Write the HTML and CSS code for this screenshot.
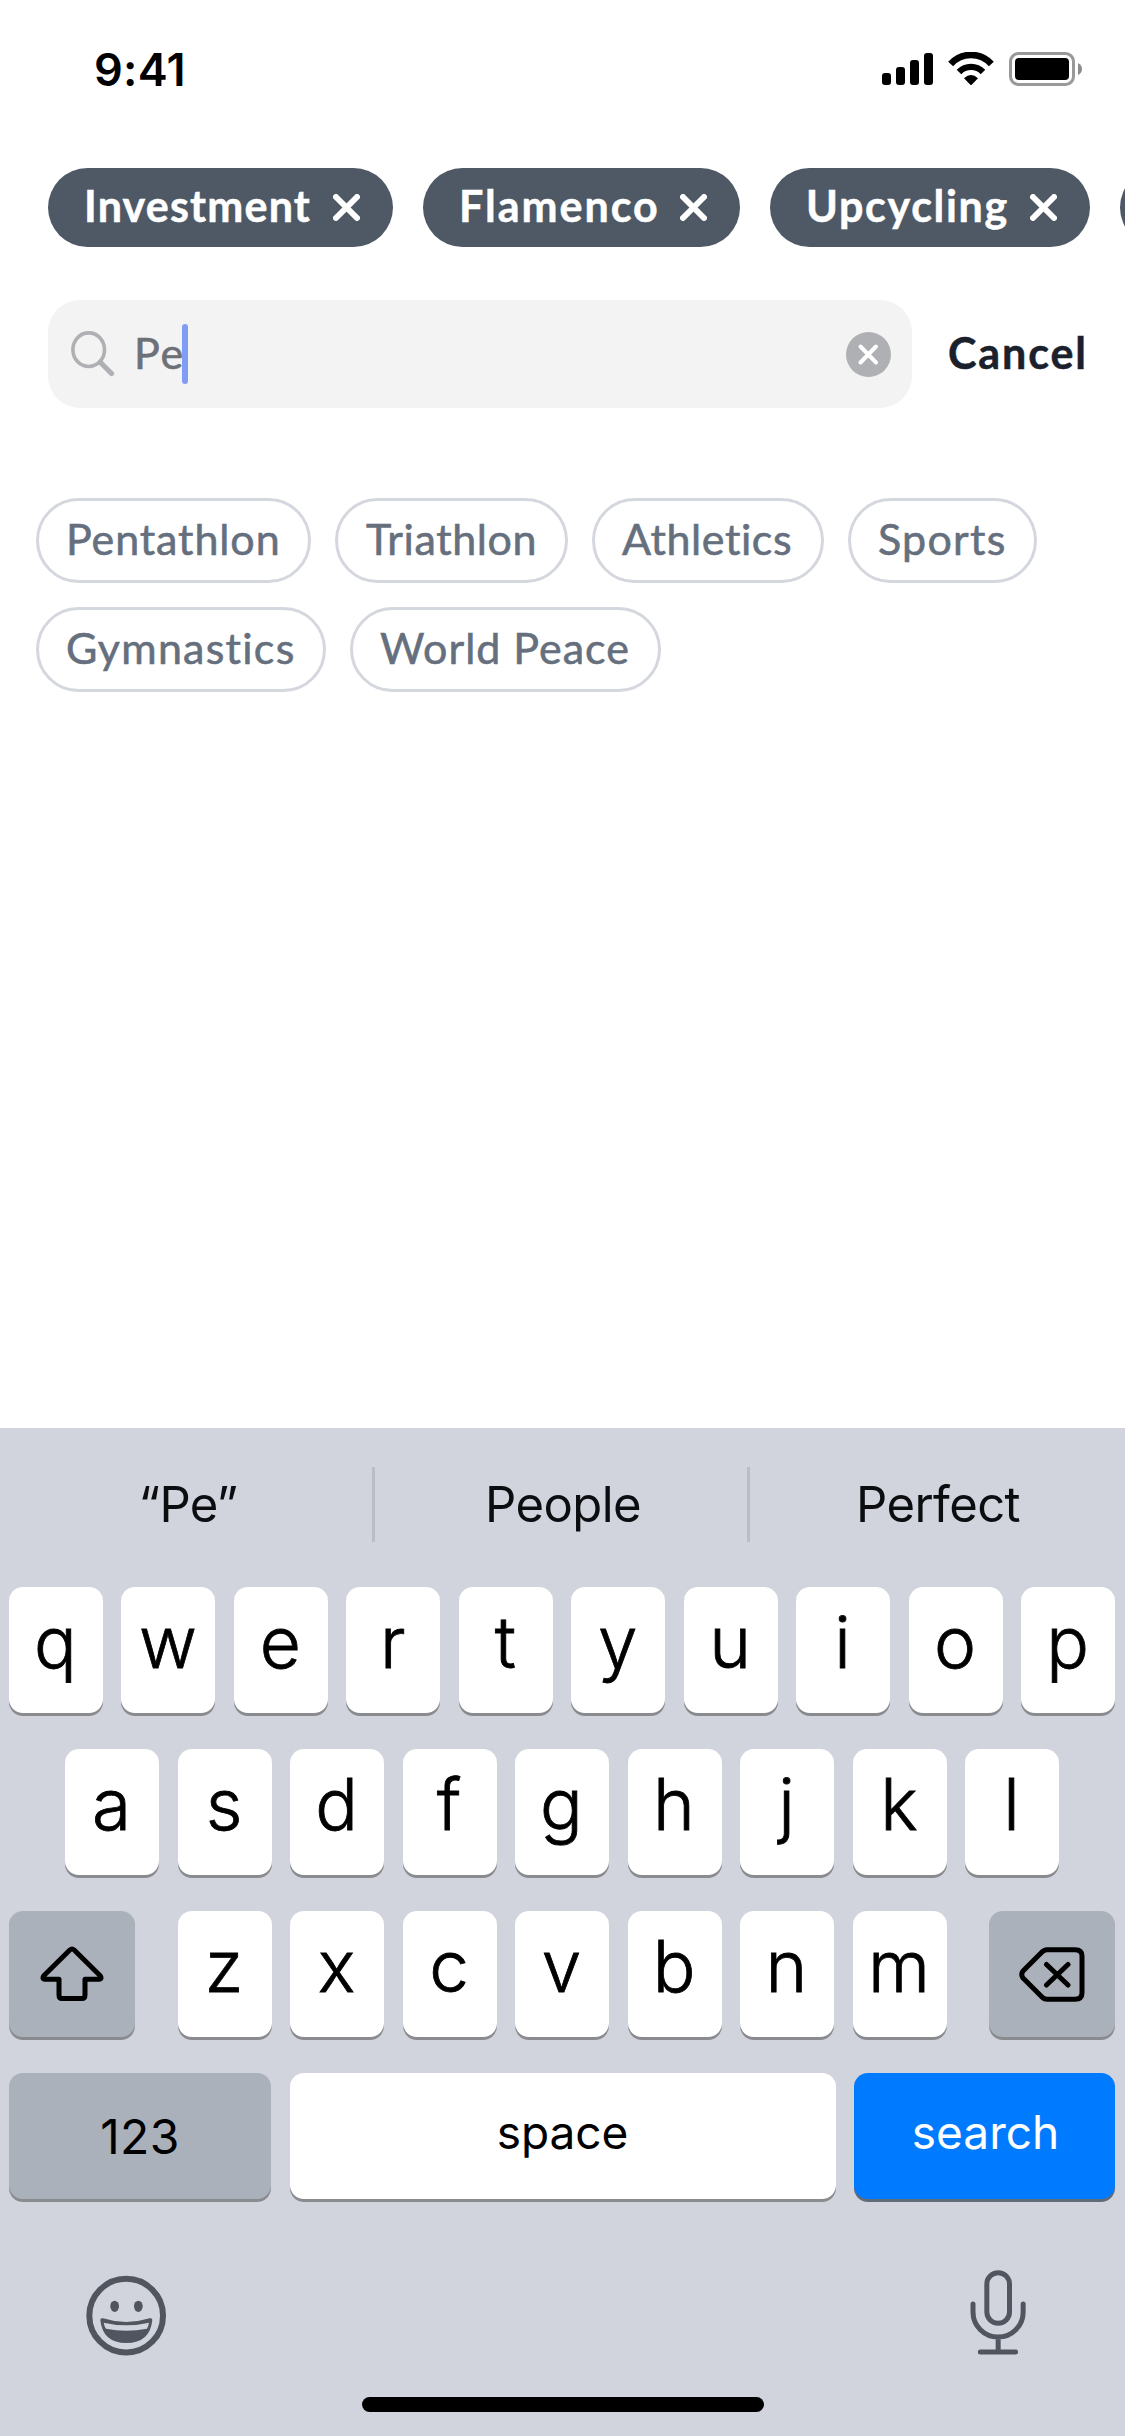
FILE: index.html
```html
<!DOCTYPE html>
<html lang="en">
<head>
<meta charset="utf-8">
<title>Search interests</title>
<link rel="stylesheet" href="styles.css">
</head>
<body>
<div class="screen">
  <header class="status">
    <span class="time">9:41</span>
    <div class="status-icons">
      <svg class="signal" viewBox="0 0 51 34"><rect x="0" y="21" width="9" height="12" rx="3"/><rect x="14" y="15" width="9" height="18" rx="3"/><rect x="28" y="8" width="9" height="25" rx="3"/><rect x="42" y="1" width="9" height="32" rx="3"/></svg>
      <svg class="wifi" viewBox="264 66 138 102"><path d="M272 102A82 82 0 0 1 394 102" fill="none" stroke="#000" stroke-width="20"/><path d="M297 126A50 50 0 0 1 369 126" fill="none" stroke="#000" stroke-width="19"/><path d="M312 145Q333 125 354 145L335 164Q333 166 331 164Z"/></svg>
      <svg class="battery" viewBox="0 0 73 34"><rect x="1.5" y="1.5" width="63" height="31" rx="8" fill="none" stroke="#999" stroke-width="3"/><rect x="6" y="6" width="54" height="22" rx="4"/><path d="M69 11Q73 13 73 17T69 23Z" fill="#8c8c8c"/></svg>
    </div>
  </header>

  <div class="chips">
    <div class="chip chip-investment"><span>Investment</span><svg class="x" viewBox="0 0 27 27"><path d="M3 3L24 24M24 3L3 24"/></svg></div>
    <div class="chip chip-flamenco"><span>Flamenco</span><svg class="x" viewBox="0 0 27 27"><path d="M3 3L24 24M24 3L3 24"/></svg></div>
    <div class="chip chip-upcycling"><span>Upcycling</span><svg class="x" viewBox="0 0 27 27"><path d="M3 3L24 24M24 3L3 24"/></svg></div>
    <div class="chip chip-next"></div>
  </div>

  <div class="search-row">
    <div class="search">
      <svg class="magnifier" viewBox="0 0 44 46"><ellipse cx="17.7" cy="18.7" rx="15.8" ry="16.8" stroke-width="3.6"/><path d="M29.5 31.5L40.5 42.5" stroke-width="5.2"/></svg>
      <span class="query">Pe</span><span class="caret"></span>
      <svg class="clear" viewBox="0 0 45 45"><circle cx="22.5" cy="22.5" r="22.5"/><path d="M14.5 14.5L30 30.5M30 14.5L14.5 30.5"/></svg>
    </div>
    <span class="cancel">Cancel</span>
  </div>

  <div class="results">
    <span class="tag tag-pentathlon">Pentathlon</span>
    <span class="tag tag-triathlon">Triathlon</span>
    <span class="tag tag-athletics">Athletics</span>
    <span class="tag tag-sports">Sports</span>
    <span class="tag tag-gymnastics">Gymnastics</span>
    <span class="tag tag-peace">World Peace</span>
  </div>

  <div class="keyboard">
    <div class="predictions"><span>“Pe”</span><span>People</span><span>Perfect</span></div>
    <div class="keys">
      <div class="row"><b>q</b><b>w</b><b>e</b><b>r</b><b>t</b><b>y</b><b>u</b><b>i</b><b>o</b><b>p</b></div>
      <div class="row"><b>a</b><b>s</b><b>d</b><b>f</b><b>g</b><b>h</b><b>j</b><b>k</b><b>l</b></div>
      <div class="row row-split">
        <div class="key-mod"><svg class="shift" viewBox="0 0 64 56"><path d="M29.8 4Q32 2 34.2 4L60 29.5Q62.5 33 59 33.3H45V49Q45 52.5 42 52.5H22Q19 52.5 19 49V33.3H5Q1.5 33 4 29.5Z"/></svg></div>
        <div class="row"><b>z</b><b>x</b><b>c</b><b>v</b><b>b</b><b>n</b><b>m</b></div>
        <div class="key-mod"><svg class="delete" viewBox="0 0 66 55"><path d="M28 2.8H56Q63 2.8 63 9V46Q63 52.2 56 52.2H28Q25 52.2 22.5 49.5L4 31Q1.5 27.5 4 24L22.5 5.5Q25 2.8 28 2.8ZM27.5 17.5L49 38M49 17.5L27.5 38"/></svg></div>
      </div>
      <div class="row row-split">
        <div class="key-num">123</div>
        <div class="key-space">space</div>
        <div class="key-search">search</div>
      </div>
    </div>
    <div class="tools">
      <svg viewBox="0 0 330 330"><circle cx="150.500" cy="167" r="110.500" fill="none" stroke="#50555f" stroke-width="18"/><ellipse cx="116" cy="139" rx="13" ry="17"/><ellipse cx="187" cy="139" rx="13" ry="17"/><path fill-rule="evenodd" d="M73 180Q73 173 81 175Q150 197 221 175Q229 173 229 180Q222 249 151 249Q80 249 73 180ZM83 188Q86 202 90 206Q150 218 213 206Q217 200 219 188Q150 204 83 188Z"/></svg>
      <svg viewBox="0 0 330 330"><g fill="none" stroke="#50555f" stroke-width="15" stroke-linecap="round"><rect x="110.500" y="38" width="68" height="152" rx="34"/><path d="M69 132V156A75 75 0 0 0 219.500 156V132M144.500 231V276M91 276H197"/></g></svg>
    </div>
    <div class="home"></div>
  </div>
</div>
</body>
</html>
```
FILE: styles.css
```css
* { box-sizing: border-box; }
body { margin: 0; background: #fff; }
svg { display: block; flex: none; }

.screen {
  width: 1125px;
  height: 2436px;
  overflow: hidden;
  display: flex;
  flex-direction: column;
  background: #fff;
  font-family: Lato, "Open Sans", sans-serif;
  font-size: 43px;
  white-space: nowrap;
}

/* Status bar */
.status {
  height: 138px;
  padding: 0 43px 0 94px;
  display: flex;
  justify-content: space-between;
  align-items: center;
}
.time { font: 600 45px Inter, sans-serif; letter-spacing: .3px; }
.status-icons { display: flex; gap: 15px; }
.signal { width: 51px; height: 34px; }
.wifi { width: 46px; height: 34px; }
.battery { width: 73px; height: 34px; }

/* Selected interests */
.chips { display: flex; gap: 30px; padding-left: 48px; margin-top: 30px; }
.chip {
  flex: none;
  height: 79px;
  padding: 0 33px 0 36px;
  border-radius: 40px;
  background: #4f5965;
  color: #fff;
  font-weight: 700;
  display: flex;
  align-items: center;
  justify-content: space-between;
}
.chip span { padding-bottom: 4px; -webkit-text-stroke: .5px; }
.chip-investment { width: 345px; letter-spacing: 1.2px; }
.chip-flamenco { width: 317px; letter-spacing: 2px; }
.chip-upcycling { width: 320px; letter-spacing: 1.7px; }
.chip-next { width: 320px; }
.x { width: 27px; height: 27px; fill: none; stroke: #fff; stroke-width: 6; stroke-linecap: round; }

/* Search field */
.search-row { display: flex; align-items: center; margin-top: 53px; padding-left: 48px; }
.search {
  width: 864px;
  height: 108px;
  padding: 0 21px 0 23px;
  border-radius: 32px;
  background: #f3f3f3;
  display: flex;
  align-items: center;
}
.magnifier { width: 44px; height: 46px; fill: none; stroke: #afb0b3; stroke-linecap: round; }
.query { margin-left: 19px; width: 48px; padding-bottom: 3px; color: #6d7076; letter-spacing: 1.8px; -webkit-text-stroke: .6px; }
.caret { width: 6px; height: 60px; border-radius: 3px; background: #809cf5; }
.clear { width: 45px; height: 45px; margin-left: auto; fill: #afb0b3; stroke-linecap: round; }
.clear path { stroke: #fff; stroke-width: 4; }
.cancel { margin-left: 36px; padding-bottom: 3px; font-weight: 700; color: #1a202c; letter-spacing: 1.9px; -webkit-text-stroke: .5px; }

/* Matching interests */
.results { display: flex; flex-wrap: wrap; gap: 24px; margin: 90px 36px 0; }
.tag {
  height: 85px;
  padding: 0 0 5px 27px;
  border: 3px solid #d4d7dd;
  border-radius: 43px;
  color: #666f7d;
  -webkit-text-stroke: .6px;
  display: flex;
  align-items: center;
}
.tag-pentathlon { width: 275px; letter-spacing: .9px; }
.tag-triathlon { width: 233px; padding-left: 28px; letter-spacing: .6px; }
.tag-athletics { width: 232px; letter-spacing: .6px; }
.tag-sports { width: 189px; letter-spacing: 1.25px; }
.tag-gymnastics { width: 290px; letter-spacing: 1.25px; }
.tag-peace { width: 311px; letter-spacing: 1px; }

/* Keyboard */
.keyboard {
  height: 1008px;
  margin-top: auto;
  background: #d1d4dc;
  font-family: Inter, sans-serif;
  color: #000;
}
.predictions { display: flex; padding-top: 39px; }
.predictions span {
  width: 375px;
  height: 75px;
  padding-left: 4px;
  display: flex;
  align-items: center;
  justify-content: center;
  font-size: 49px;
  letter-spacing: -.6px;
  color: #0c0d10;
  border-right: 3px solid #b9bdc7;
}
.predictions span:last-child { border-color: transparent; }
.keys { display: flex; flex-direction: column; gap: 36px; margin-top: 45px; padding: 0 10px 0 9px; }
.row { display: flex; justify-content: center; gap: 18.5px; }
.row-split { justify-content: space-between; gap: 0; }
.row b, .key-mod, .key-num, .key-space, .key-search {
  height: 126px;
  border-radius: 14px;
  background: #fff;
  box-shadow: 0 3px 0 #898b8f;
  display: flex;
  align-items: center;
  justify-content: center;
}
.row b { width: 94px; padding: 0 1px 16px 0; font-size: 71px; font-weight: 300; -webkit-text-stroke: .8px; }
.row .key-mod { width: 126px; background: #abb1bb; }
.shift, .delete { fill: none; stroke: #000; stroke-width: 5; stroke-linejoin: round; stroke-linecap: round; }
.shift { width: 64px; height: 56px; }
.delete { width: 66px; height: 55px; }
.row .key-num { width: 262px; background: #abb1bb; font-size: 48px; letter-spacing: .4px; }
.row .key-space { width: 546px; padding-bottom: 8px; font-size: 46px; letter-spacing: -.1px; }
.row .key-search { width: 261px; padding: 0 0 8px 2px; font-size: 46px; background: #007aff; color: #fff; box-shadow: 0 3px 0 #626b78; }
.tools { display: flex; justify-content: space-between; margin-top: 61px; padding: 0 65px 0 76px; }
.tools svg { width: 110px; height: 110px; fill: #50555f; }
.home { width: 402px; height: 15px; margin: 27px auto 0; border-radius: 8px; background: #000; }
```
